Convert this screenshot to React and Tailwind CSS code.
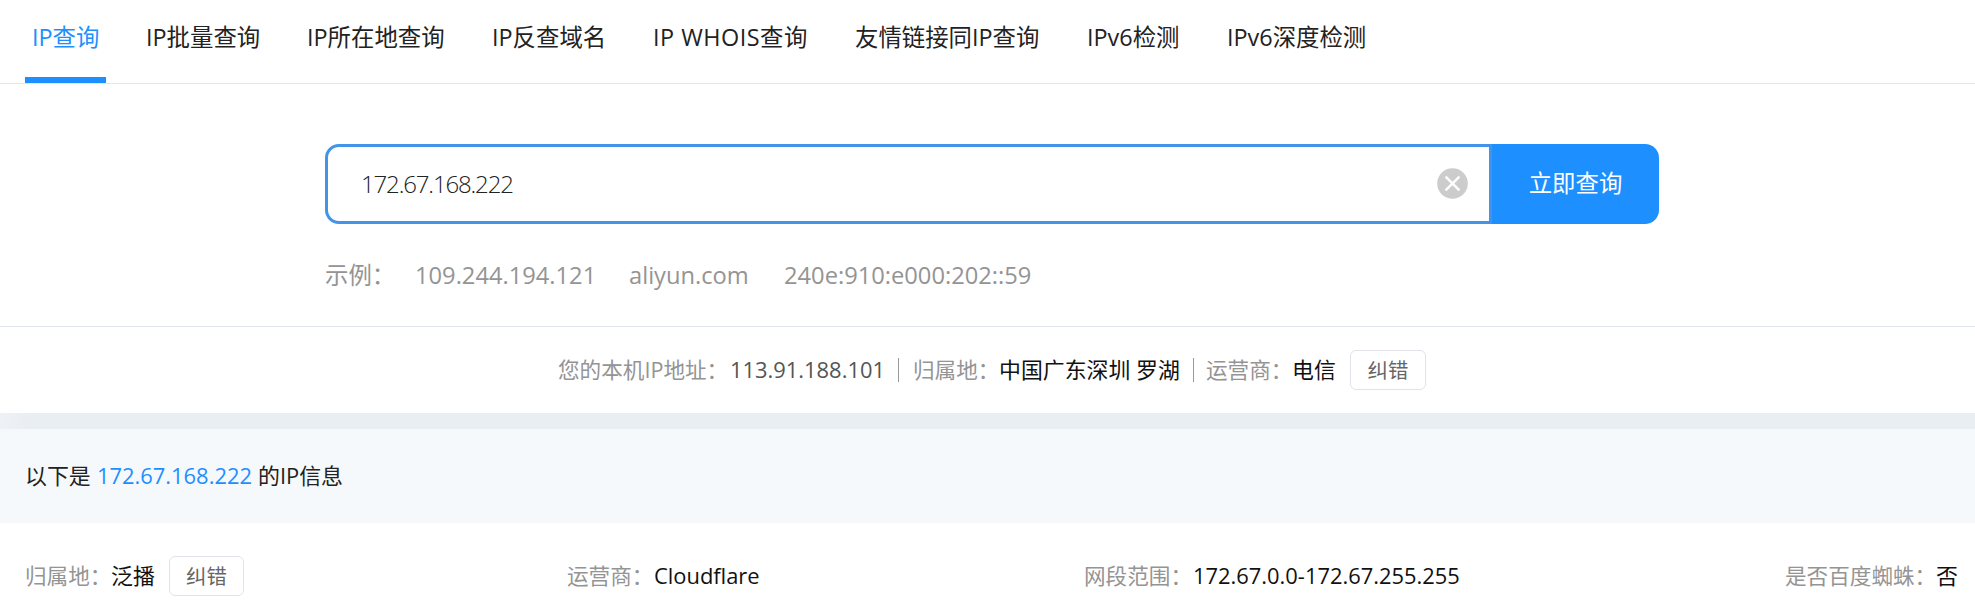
const tabs = [
  { label: 'IP查询', cls: 'w-[81px] pl-[7px] mr-[34px] text-[#1e8fff] border-b-[6px] border-[#1e8fff]' },
  { label: 'IP批量查询', cls: 'w-[160px] pl-[6px]' },
  { label: 'IP所在地查询', cls: 'w-[185px] pl-[7px]' },
  { label: 'IP反查域名', cls: 'w-[161px] pl-[7px]' },
  { label: 'IP WHOIS查询', cls: 'w-[202px] pl-[7px] tracking-[0.5px]' },
  { label: '友情链接同IP查询', cls: 'w-[231px] pl-[7px]' },
  { label: 'IPv6检测', cls: 'w-[141px] pl-[8px]' },
  { label: 'IPv6深度检测', cls: 'w-[160px] pl-[7px]' },
];

function FixButton({ className }) {
  return (
    <button className={`h-[40px] rounded-[6px] border border-[#e2e3e8] bg-white text-center text-[20.4px] leading-[38px] text-[#666] ${className}`}>
      纠错
    </button>
  );
}

function ClearIcon() {
  return (
    <svg className="mb-[2px] h-[31px] w-[31px]" viewBox="0 0 31 31">
      <circle cx="15.5" cy="15.5" r="15.3" fill="#ccc" />
      <path d="M8.6 8.6 22.4 22.4M22.4 8.6 8.6 22.4" stroke="#fff" strokeWidth="2.4" />
    </svg>
  );
}

export default function App() {
  return (
    <div className="h-[615px] w-[1975px] overflow-hidden whitespace-nowrap bg-white font-['Open_Sans','Noto_Sans_CJK_SC',sans-serif] text-[21.9px] text-[#222]">
      <nav className="flex h-[84px] border-b border-[#e6e6e6] pl-[25px] text-[23.4px]">
        {tabs.map((t) => (
          <a key={t.label} className={`h-[83px] shrink-0 leading-[75px] ${t.cls}`}>
            {t.label}
          </a>
        ))}
      </nav>

      <section className="h-[243px] border-b border-[#e1e5ec] pl-[325px] pt-[60px]">
        <div className="flex h-[80px] w-[1334px]">
          <div className="flex w-[1167px] items-center justify-between rounded-l-[14px] border-[3px] border-[#4293e9] pl-[33px] pr-[21px]">
            <span className="text-[24px] font-light tracking-[-1.15px] text-[#222]">172.67.168.222</span>
            <ClearIcon />
          </div>
          <button className="w-[167px] rounded-r-[14px] bg-[#1e8fff] text-[23.4px] text-white">立即查询</button>
        </div>
        <div className="flex h-[103px] text-[23.7px] leading-[102px] text-[#949494]">
          <span className="w-[90px] text-[23.4px]">示例：</span>
          <span className="w-[214px]">109.244.194.121</span>
          <span className="w-[155px]">aliyun.com</span>
          <span>240e:910:e000:202::59</span>
        </div>
      </section>

      <section className="flex h-[86px] items-center pl-[558px]">
        <span className="w-[172px] text-[21.6px] text-[#949494]">您的本机IP地址：</span>
        <span className="w-[168px] text-[#555]">113.91.188.101</span>
        <i className="h-[24px] w-px bg-[#999]" />
        <span className="ml-[14px] w-[86px] text-[21.6px] text-[#949494]">归属地：</span>
        <span className="w-[194px] text-[#111]">中国广东深圳 罗湖</span>
        <i className="h-[24px] w-px bg-[#999]" />
        <span className="ml-[12px] w-[86px] text-[21.6px] text-[#949494]">运营商：</span>
        <span className="w-[58px] text-[#111]">电信</span>
        <FixButton className="w-[76px]" />
      </section>

      <div className="h-[16px] bg-linear-to-r from-[#eef2f5] to-[#e9eef2] to-[30px]" />

      <section className="flex h-[94px] items-center bg-[#f5f9fc] pl-[25px]">
        <span className="w-[72px]">以下是</span>
        <span className="w-[161px] text-[#1e8fff]">172.67.168.222</span>
        <span>的IP信息</span>
      </section>

      <section className="flex h-[92px] items-center pl-[25px] pt-[14px]">
        <span className="w-[86px] text-[21.6px] text-[#949494]">归属地：</span>
        <span className="w-[58px] text-[#111]">泛播</span>
        <FixButton className="mr-[323px] w-[75px]" />
        <span className="w-[87px] text-[21.6px] text-[#949494]">运营商：</span>
        <span className="w-[430px] text-[#111]">Cloudflare</span>
        <span className="w-[109px] text-[21.6px] text-[#949494]">网段范围：</span>
        <span className="w-[592px] text-[#111]">172.67.0.0-172.67.255.255</span>
        <span className="w-[151px] text-[21.6px] text-[#949494]">是否百度蜘蛛：</span>
        <span className="text-[#111]">否</span>
      </section>
    </div>
  );
}
